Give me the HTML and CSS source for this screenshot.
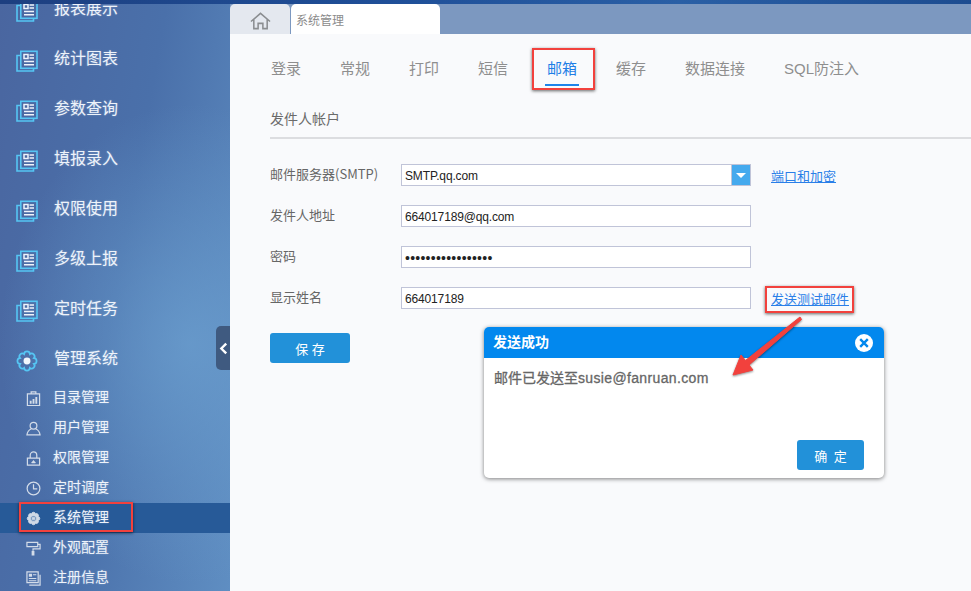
FILE: index.html
```html
<!DOCTYPE html>
<html lang="en">

<head>
    <meta charset="UTF-8">
    <meta name="viewport" content="width=device-width, initial-scale=1.0">
    <title>系统管理</title>
    <link rel="stylesheet" href="styles.css">
</head>

<body>
    <svg class="icon-defs" aria-hidden="true">
        <symbol id="i-report" viewBox="0 0 22 22">
            <path d="M4 5.500H1V21H17.500V18.500" fill="none" stroke="#55c6f4" stroke-width="1.600" />
            <rect x="4.800" y="1.300" width="16.200" height="17" fill="none" stroke="#55c6f4" stroke-width="1.600" />
            <path d="M8 4.500h4v4H8zM13.500 5h4.500M13.500 8h4.500M8 11.500h10M8 14.800h10" fill="none" stroke="#eef4fb" stroke-width="1.500" />
        </symbol>
        <symbol id="i-gear" viewBox="1.500 1.500 19 19">
            <path d="M17 8.510A2.500 2.500 0 0 1 17 13.490A2.500 2.500 0 0 1 13.490 17A2.500 2.500 0 0 1 8.510 17A2.500 2.500 0 0 1 5 13.490A2.500 2.500 0 0 1 5 8.510A2.500 2.500 0 0 1 8.510 5A2.500 2.500 0 0 1 13.490 5A2.500 2.500 0 0 1 17 8.510Z" fill="none" stroke="#55c6f4" stroke-width="1.500" />
            <circle cx="11" cy="11" r="3" fill="#f2f7fc" />
        </symbol>
        <symbol id="i-gear-solid" viewBox="1 1 20 20">
            <path d="M17 8.510A2.500 2.500 0 0 1 17 13.490A2.500 2.500 0 0 1 13.490 17A2.500 2.500 0 0 1 8.510 17A2.500 2.500 0 0 1 5 13.490A2.500 2.500 0 0 1 5 8.510A2.500 2.500 0 0 1 8.510 5A2.500 2.500 0 0 1 13.490 5A2.500 2.500 0 0 1 17 8.510Z" fill="#cfd9e6" />
            <circle cx="11" cy="11" r="3.800" fill="#3f6da3" />
            <circle cx="11" cy="11" r="1.800" fill="#cfd9e6" />
        </symbol>
    </svg>

    <div class="top-strip"></div>

    <div class="page">
        <aside class="sidebar">
            <ul class="nav">
                <li class="nav-item"><svg class="nav-icon"><use href="#i-report" /></svg>报表展示</li>
                <li class="nav-item"><svg class="nav-icon"><use href="#i-report" /></svg>统计图表</li>
                <li class="nav-item"><svg class="nav-icon"><use href="#i-report" /></svg>参数查询</li>
                <li class="nav-item"><svg class="nav-icon"><use href="#i-report" /></svg>填报录入</li>
                <li class="nav-item"><svg class="nav-icon"><use href="#i-report" /></svg>权限使用</li>
                <li class="nav-item"><svg class="nav-icon"><use href="#i-report" /></svg>多级上报</li>
                <li class="nav-item"><svg class="nav-icon"><use href="#i-report" /></svg>定时任务</li>
                <li class="nav-item"><svg class="nav-icon"><use href="#i-gear" /></svg>管理系统</li>
            </ul>
            <ul class="subnav">
                <li class="sub-item">
                    <svg class="sub-icon" viewBox="0 0 16 16"><path d="M1.500 3h13v12.500h-13zM5.500 3V1h5v2" /><path class="solid" d="M4 10.500h2v3H4zM7 8.500h2v5H7zM10 6.500h2v7h-2z" /></svg>
                    目录管理
                </li>
                <li class="sub-item">
                    <svg class="sub-icon" viewBox="0 0 16 16"><circle cx="8" cy="5" r="3.600" /><path d="M5.500 8.500C3 9.500 1.500 11 1 14.800H15C14.500 11 13 9.500 10.500 8.500" /></svg>
                    用户管理
                </li>
                <li class="sub-item">
                    <svg class="sub-icon" viewBox="0 0 16 16"><path d="M1.500 7.500h13v7.500h-13zM4.500 7.500V4.500a3.500 3.500 0 0 1 7 0v3" /><path class="solid" d="M8 9.500l2 2.500v1H6v-1z" /></svg>
                    权限管理
                </li>
                <li class="sub-item">
                    <svg class="sub-icon" viewBox="0 0 16 16"><circle cx="8" cy="8" r="6.800" /><path d="M8 3.500V8.500H12" /></svg>
                    定时调度
                </li>
                <li class="sub-item active">
                    <svg class="sub-icon"><use href="#i-gear-solid" /></svg>
                    系统管理
                </li>
                <li class="sub-item">
                    <svg class="sub-icon" viewBox="0 0 16 16"><path d="M1 1.500h11.500v4.500H1zM12.500 3.500H15V8.500H7.500V10.500" /><path class="solid" d="M6 10.500h3v5H6z" /></svg>
                    外观配置
                </li>
                <li class="sub-item">
                    <svg class="sub-icon" viewBox="0 0 16 16"><path d="M1 1h12v11.500H1zM15 4v11H3.500" /><path class="solid" d="M3 3h3.500v3H3zM7.500 3.500H11v1H7.500zM3 7.500h8v1H3zM3 9.800h8v1H3z" /></svg>
                    注册信息
                </li>
            </ul>
        </aside>

        <main class="main">
            <div class="tab-bar">
                <div class="tab tab-home">
                    <svg class="home-icon" viewBox="0 0 22 18"><path d="M1 9.500L11 1L21 9.500M4 7.500V17H8.500V11.500H13.500V17H18V7.500" /></svg>
                </div>
                <div class="tab tab-current">系统管理</div>
            </div>

            <div class="content">
                <ul class="sub-tabs">
                    <li>登录</li>
                    <li>常规</li>
                    <li>打印</li>
                    <li>短信</li>
                    <li class="selected">邮箱</li>
                    <li>缓存</li>
                    <li>数据连接</li>
                    <li>SQL防注入</li>
                </ul>

                <h3 class="section-title">发件人帐户</h3>

                <form class="mail-form">
                    <div class="form-row">
                        <label>邮件服务器(SMTP)</label>
                        <div class="combo">
                            <input type="text" value="SMTP.qq.com">
                            <span class="combo-btn"></span>
                        </div>
                        <a class="form-link" href="#">端口和加密</a>
                    </div>
                    <div class="form-row">
                        <label>发件人地址</label>
                        <input type="text" value="664017189@qq.com">
                    </div>
                    <div class="form-row">
                        <label>密码</label>
                        <input class="pw" type="password" value="12345678901234567">
                    </div>
                    <div class="form-row">
                        <label>显示姓名</label>
                        <input type="text" value="664017189">
                        <a class="form-link" href="#">发送测试邮件</a>
                    </div>
                    <button type="button" class="btn btn-save">保 存</button>
                </form>
            </div>
        </main>

        <div class="collapse-handle">
            <svg viewBox="0 0 8 12"><path d="M6.500 1.500L2 6L6.500 10.500" /></svg>
        </div>

        <div class="dialog">
            <div class="dialog-head">
                发送成功
                <svg class="dialog-close" viewBox="0 0 18 18">
                    <circle cx="9" cy="9" r="9" fill="#fff" />
                    <path d="M5.200 5.200L12.800 12.800M12.800 5.200L5.200 12.800" stroke="#0288ee" stroke-width="2.400" />
                </svg>
            </div>
            <div class="dialog-body">邮件已发送至<span class="mail-addr">susie@fanruan.com</span></div>
            <div class="dialog-foot">
                <button type="button" class="btn btn-ok">确 定</button>
            </div>
        </div>

        <!-- red marks drawn over the screenshot -->
        <div class="mark mark-tab"></div>
        <div class="mark mark-link"></div>
        <div class="mark mark-side"></div>
        <svg class="arrow" viewBox="0 0 80 70">
            <path d="M68 2L69.500 4.500L17 50L21 55L1 60L9 40L13.500 45.500Z" fill="#f2413d" stroke="#f2413d" stroke-width="1" />
        </svg>
    </div>
</body>

</html>
```

FILE: styles.css
```css
* {
    box-sizing: border-box;
}

html,
body {
    height: 100%;
    margin: 0;
    overflow: hidden;
}

body {
    font-family: "Liberation Sans", "Noto Sans CJK SC", sans-serif;
    background-color: #f9fafc;
}

ul {
    list-style-type: none;
    margin: 0;
    padding: 0;
}

.icon-defs {
    position: absolute;
    width: 0;
    height: 0;
}

.top-strip {
    height: 4px;
    background: linear-gradient(90deg, #1d3f80, #1f4f98 40%, #2a5fa5 70%, #1d4c90);
}

.page {
    position: relative;
    display: flex;
    height: 587px;
    overflow: hidden;
}

/* sidebar */
.sidebar {
    width: 230px;
    flex-shrink: 0;
    overflow: hidden;
    color: #eef3fa;
    background:
        radial-gradient(ellipse 190px 240px at 190px 340px, rgba(108, 160, 208, 0.75), rgba(108, 160, 208, 0) 100%),
        linear-gradient(100deg, #4a66a0 0, #4a70aa 50%, #5f8ec2 100%);
}

.nav {
    margin-top: -21px;
}

.nav-item {
    display: flex;
    align-items: center;
    height: 50px;
    padding: 0 0 2px 16px;
    font-size: 16px;
    text-shadow: 0 0 2px rgba(220, 235, 250, 0.4);
}

.nav-icon {
    width: 22px;
    height: 22px;
    margin: 7px 16px 0 0;
}

.sub-item {
    display: flex;
    align-items: center;
    height: 30px;
    padding: 0 0 5px 26px;
    font-size: 14px;
    text-shadow: 0 0 2px rgba(220, 235, 250, 0.4);
}

.sub-item.active {
    background-color: #275a98;
}

.sub-icon {
    width: 15px;
    height: 15px;
    margin: 5px 12px 0 0;
    fill: none;
    stroke: #d3dce9;
    stroke-width: 1.300;
    flex-shrink: 0;
}

.sub-icon .solid {
    fill: #d3dce9;
    stroke: none;
}

/* tabs */
.main {
    flex: 1;
    min-width: 0;
}

.tab-bar {
    display: flex;
    height: 30px;
    background-color: #7c98c0;
}

.tab {
    height: 30px;
    border-radius: 5px 5px 0 0;
}

.tab-home {
    display: flex;
    align-items: center;
    justify-content: center;
    width: 60px;
    margin-right: 1px;
    background-color: #e4e8ef;
}

.home-icon {
    width: 21px;
    height: 18px;
    margin-top: 4px;
    fill: none;
    stroke: #8a8d90;
    stroke-width: 1.600;
}

.tab-current {
    width: 149px;
    padding: 9px 0 0 5px;
    font-size: 12px;
    line-height: 16px;
    color: #8b8b8b;
    background-color: #fff;
}

/* content */
.content {
    height: 557px;
    padding: 25px 0 0 40px;
    background-color: #f9fafc;
}

.sub-tabs {
    display: flex;
    gap: 37px;
    font-size: 15px;
    line-height: 20px;
    color: #8e8e8e;
}

.sub-tabs li {
    padding: 0 1px 5px;
    border-bottom: 2px solid transparent;
}

.sub-tabs .selected {
    margin: 0 -1px;
    padding: 0 2px 5px;
    color: #1e7ee6;
    border-bottom-color: #1e84ea;
}

.section-title {
    margin: 23px 0 0;
    padding-bottom: 8px;
    font-size: 14px;
    font-weight: normal;
    line-height: 20px;
    color: #6b6b6b;
    border-bottom: 2px solid #dcdde0;
}

.mail-form {
    margin-top: 25px;
}

.form-row {
    display: flex;
    align-items: center;
    height: 22px;
    margin-bottom: 19px;
}

.form-row label {
    width: 131px;
    margin-top: -4px;
    font-family: "Noto Sans CJK SC", sans-serif;
    font-size: 13px;
    color: #666;
}

.form-row input {
    width: 350px;
    height: 22px;
    padding: 2px 3px 0;
    border: 1px solid #c0c4d8;
    border-radius: 0;
    outline: none;
    font-family: inherit;
    font-size: 12px;
    letter-spacing: -0.15px;
    color: #222;
    background-color: #fff;
}

.form-row .pw {
    font-size: 14px;
    letter-spacing: 0.25px;
}

.combo {
    position: relative;
    width: 350px;
}

.combo-btn {
    position: absolute;
    top: 0;
    right: 0;
    width: 20px;
    height: 22px;
    border: 1px solid #c0c4d8;
    background-color: #45aaee;
}

.combo-btn::after {
    content: "";
    position: absolute;
    top: 8px;
    left: 4px;
    border-style: solid;
    border-width: 5px 5px 0;
    border-color: #fff transparent transparent;
}

.form-link {
    margin-left: 20px;
    font-size: 13px;
    color: #2a7fe8;
}

.btn {
    border: none;
    border-radius: 3px;
    font-family: inherit;
    font-size: 13px;
    color: #fff;
    background-color: #2291d9;
}

.btn-save {
    display: block;
    width: 80px;
    height: 30px;
    margin-top: 24px;
}

.btn-ok {
    width: 67px;
    height: 30px;
    word-spacing: 3px;
}

/* things that sit on top */
.collapse-handle {
    position: absolute;
    top: 322px;
    left: 216px;
    display: flex;
    align-items: center;
    justify-content: center;
    width: 14px;
    height: 44px;
    border-radius: 5px 0 0 5px;
    background-color: #3f5a80;
}

.collapse-handle svg {
    width: 9px;
    height: 13px;
    fill: none;
    stroke: #fff;
    stroke-width: 2.200;
}

.dialog {
    position: absolute;
    top: 323px;
    left: 484px;
    display: flex;
    flex-direction: column;
    width: 400px;
    height: 151px;
    border-radius: 5px;
    overflow: hidden;
    background-color: #fff;
    box-shadow: 0 1px 4px rgba(0, 0, 0, 0.5);
}

.dialog-head {
    position: relative;
    height: 31px;
    padding-left: 9px;
    font-size: 14px;
    font-weight: bold;
    line-height: 31px;
    color: #fff;
    background-color: #0288ee;
}

.dialog-close {
    position: absolute;
    top: 7px;
    right: 11px;
    width: 18px;
    height: 18px;
}

.dialog-body {
    flex: 1;
    padding: 10px 10px 0;
    font-size: 14px;
    line-height: 20px;
    color: #666;
    -webkit-text-stroke: 0.3px #666;
}

.mail-addr {
    letter-spacing: 0.35px;
}

.dialog-foot {
    display: flex;
    justify-content: flex-end;
    padding: 0 20px 8px 0;
}

.mark {
    position: absolute;
    border: 2px solid #f2413d;
    box-shadow: 0 1px 3px rgba(0, 0, 0, 0.6);
}

.mark-tab {
    top: 44px;
    left: 532px;
    width: 63px;
    height: 42px;
}

.mark-link {
    top: 282px;
    left: 765px;
    width: 89px;
    height: 27px;
}

.mark-side {
    top: 498px;
    left: 19px;
    width: 114px;
    height: 30px;
}

.arrow {
    position: absolute;
    top: 311px;
    left: 732px;
    width: 80px;
    height: 70px;
    filter: drop-shadow(0 1px 1px rgba(0, 0, 0, 0.45));
}
```
